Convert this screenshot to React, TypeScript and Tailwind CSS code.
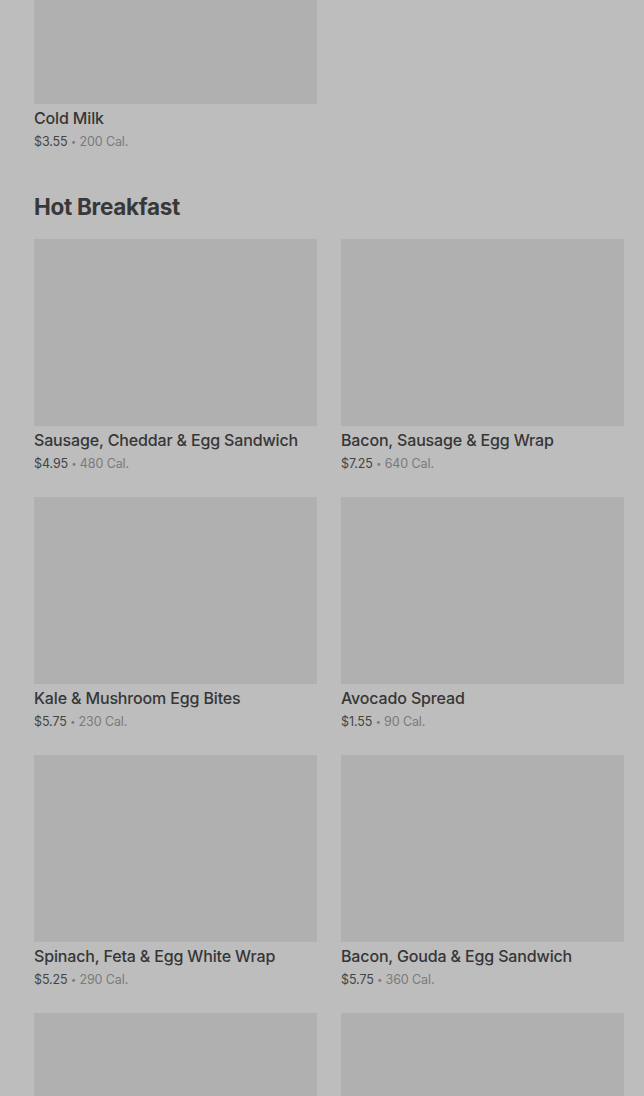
import React from 'react';

type Item = { name: string; price: string; cal: string };

const hotBreakfast: Item[] = [
  { name: 'Sausage, Cheddar & Egg Sandwich', price: '$4.95', cal: '480 Cal.' },
  { name: 'Bacon, Sausage & Egg Wrap', price: '$7.25', cal: '640 Cal.' },
  { name: 'Kale & Mushroom Egg Bites', price: '$5.75', cal: '230 Cal.' },
  { name: 'Avocado Spread', price: '$1.55', cal: '90 Cal.' },
  { name: 'Spinach, Feta & Egg White Wrap', price: '$5.25', cal: '290 Cal.' },
  { name: 'Bacon, Gouda & Egg Sandwich', price: '$5.75', cal: '360 Cal.' },
  { name: '', price: '', cal: '' },
  { name: '', price: '', cal: '' },
];

function ItemCard({ item, imageClass }: { item: Item; imageClass: string }) {
  return (
    <div className="flex flex-col">
      <div className={`${imageClass} w-full bg-[#b0b0b0]`} />
      {item.name && (
        <>
          <div className="mt-[4px] text-[16px] leading-[20px] font-medium text-[#363636] tracking-[-0.15px] whitespace-nowrap">
            {item.name}
          </div>
          <div className="mt-[5px] text-[12.5px] leading-[18px] text-[#444] tracking-[-0.1px]">
            {item.price}
            <span className="text-[#7a7a7a]">
              {' '}
              <span className="inline-block text-[9px] align-[1px]">•</span> {item.cal}
            </span>
          </div>
        </>
      )}
    </div>
  );
}

export default function App() {
  return (
    <div
      className="h-[1096px] overflow-hidden bg-[#bdbdbd] pl-[34px] pr-[20px]"
      style={{ fontFamily: 'Inter, "Noto Sans", sans-serif' }}
    >
      <div className="grid grid-cols-2 gap-x-[24px]">
        <ItemCard item={{ name: 'Cold Milk', price: '$3.55', cal: '200 Cal.' }} imageClass="h-[104px]" />
      </div>

      {/* Hot Breakfast */}
      <h2 className="mt-[41px] text-[22.5px] leading-[30px] font-bold text-[#383838] tracking-[-0.3px]">
        Hot Breakfast
      </h2>

      <div className="mt-[17px] grid grid-cols-2 gap-x-[24px] gap-y-[24px]">
        {hotBreakfast.map((item, i) => (
          <ItemCard key={i} item={item} imageClass="h-[187px]" />
        ))}
      </div>
    </div>
  );
}
